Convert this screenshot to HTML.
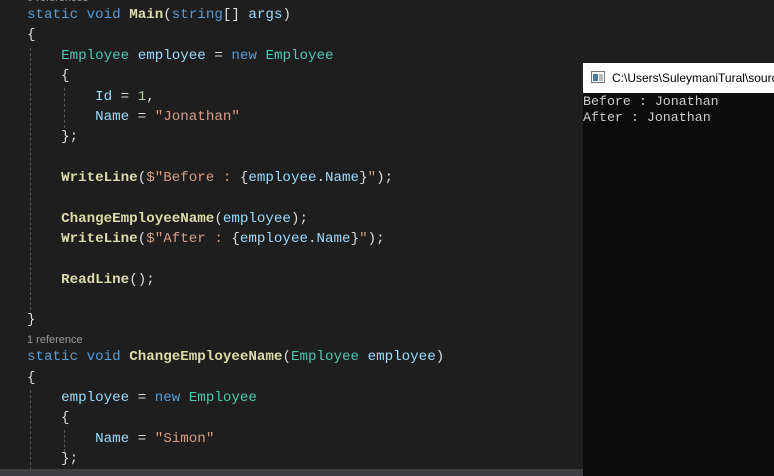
<!DOCTYPE html>
<html><head><meta charset="utf-8"><style>
body{margin:0;width:774px;height:476px;overflow:hidden;background:#1e1e1e;position:relative;font-family:"Liberation Mono",monospace;}
.l{position:absolute;left:27px;height:20px;line-height:20px;font-size:14.2px;white-space:pre;color:#dcdcdc;}
.k{color:#569cd6}.t{color:#4ec9b0}.v{color:#9cdcfe}.m{color:#dcdcaa;font-weight:bold}.s{color:#d69d85}.n{color:#b5cea8}
.cl{position:absolute;left:27px;font-family:"Liberation Sans",sans-serif;font-size:11px;color:#999;}
.g{position:absolute;width:0;border-left:1px dashed #555;}
#con{position:absolute;left:583px;top:63px;width:191px;height:413px;background:#0c0c0c;}
#tb{position:absolute;left:0;top:0;width:191px;height:30px;background:#fff;}
#tb span{position:absolute;left:29px;top:8px;font-family:"Liberation Sans",sans-serif;font-size:12px;color:#000;white-space:nowrap;}
.ct{position:absolute;left:0;font-size:13.3px;color:#ccc;white-space:pre;line-height:16px;}
</style></head><body>
<div class="cl" style="top:-8px">0 references</div>
<div class="l" style="top:5px"><span class="k">static</span> <span class="k">void</span> <span class="m">Main</span>(<span class="k">string</span>[] <span class="v">args</span>)</div>
<div class="l" style="top:25px">{</div>
<div class="l" style="top:46px">    <span class="t">Employee</span> <span class="v">employee</span> = <span class="k">new</span> <span class="t">Employee</span></div>
<div class="l" style="top:66px">    {</div>
<div class="l" style="top:87px">        <span class="v">Id</span> = <span class="n">1</span>,</div>
<div class="l" style="top:107px">        <span class="v">Name</span> = <span class="s">"Jonathan"</span></div>
<div class="l" style="top:127px">    };</div>
<div class="l" style="top:168px">    <span class="m">WriteLine</span>(<span class="s">$"Before : </span>{<span class="v">employee</span>.<span class="v">Name</span>}<span class="s">"</span>);</div>
<div class="l" style="top:209px">    <span class="m">ChangeEmployeeName</span>(<span class="v">employee</span>);</div>
<div class="l" style="top:229px">    <span class="m">WriteLine</span>(<span class="s">$"After : </span>{<span class="v">employee</span>.<span class="v">Name</span>}<span class="s">"</span>);</div>
<div class="l" style="top:270px">    <span class="m">ReadLine</span>();</div>
<div class="l" style="top:310px">}</div>
<div class="cl" style="top:334px">1 reference</div>
<div class="l" style="top:347px"><span class="k">static</span> <span class="k">void</span> <span class="m">ChangeEmployeeName</span>(<span class="t">Employee</span> <span class="v">employee</span>)</div>
<div class="l" style="top:368px">{</div>
<div class="l" style="top:388px">    <span class="v">employee</span> = <span class="k">new</span> <span class="t">Employee</span></div>
<div class="l" style="top:408px">    {</div>
<div class="l" style="top:429px">        <span class="v">Name</span> = <span class="s">"Simon"</span></div>
<div class="l" style="top:449px">    };</div>
<div class="g" style="left:30px;top:48px;height:262px"></div>
<div class="g" style="left:64px;top:88px;height:40px"></div>
<div class="g" style="left:30px;top:390px;height:80px"></div>
<div class="g" style="left:64px;top:430px;height:22px"></div>
<div style="position:absolute;left:0;top:469px;width:583px;height:7px;background:#3e3e42"></div>
<div id="con"><div id="tb">
<svg style="position:absolute;left:8px;top:8px" width="14" height="12"><rect x="0.5" y="0.5" width="13" height="11" fill="#fff" stroke="#777"/><rect x="2" y="3" width="5" height="7" fill="#4a7a9a"/><rect x="8" y="3" width="4" height="7" fill="#bbb"/></svg>
<span>C:\Users\SuleymaniTural\source</span></div>
<div class="ct" style="top:31px">Before : Jonathan</div>
<div class="ct" style="top:47px">After : Jonathan</div>
</div>
</body></html>
